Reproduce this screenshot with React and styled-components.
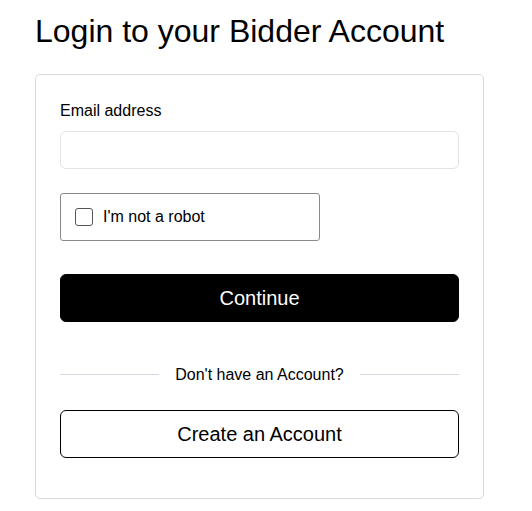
import React, { useState } from "react";
import styled, { createGlobalStyle } from "styled-components";

const GlobalStyle = createGlobalStyle`
  body {
    margin: 0;
    background: #fff;
    font-family: "Liberation Sans", Arial, sans-serif;
    color: #000;
  }
`;

const Page = styled.div`
  padding: 13px 48px 0 35px;
`;

const Title = styled.h1`
  margin: 0 0 24px;
  font-size: 32px;
  font-weight: 400;
  line-height: 37px;
`;

const Card = styled.div`
  border: 1px solid #d9d9d9;
  border-radius: 5px;
  padding: 26px 24px 40px 24px;
  width: 449px;
  box-sizing: border-box;
  display: flex;
  flex-direction: column;
`;

const Label = styled.label`
  font-size: 16px;
  line-height: 19px;
  margin-bottom: 11px;
`;

const Input = styled.input`
  height: 38px;
  box-sizing: border-box;
  border: 1px solid #e3e4e8;
  border-radius: 6px;
  padding: 0 12px;
  font-size: 16px;
  font-family: inherit;
  outline: none;
  margin-bottom: 24px;
`;

const Captcha = styled.label`
  width: 260px;
  height: 48px;
  box-sizing: border-box;
  border: 1px solid #8a8a8a;
  border-radius: 3px;
  display: flex;
  align-items: center;
  gap: 10px;
  padding-left: 14px;
  font-size: 16px;
  cursor: pointer;
  margin-bottom: 33px;
`;

const Box = styled.span`
  width: 18px;
  height: 18px;
  box-sizing: border-box;
  border: 1px solid #555;
  border-radius: 3px;
  background: ${(p) => (p.checked ? "#000" : "#fff")};
`;

const Button = styled.button`
  height: 48px;
  border-radius: 6px;
  font-size: 20px;
  font-family: inherit;
  cursor: pointer;
  border: 1px solid #000;
  background: ${(p) => (p.primary ? "#000" : "#fff")};
  color: ${(p) => (p.primary ? "#fff" : "#000")};
`;

const Divider = styled.div`
  display: flex;
  align-items: center;
  gap: 16px;
  margin: 43px 0 26px;
  font-size: 16px;
  line-height: 19px;

  &::before,
  &::after {
    content: "";
    flex: 1;
    height: 1px;
    background: #d6dae0;
  }
`;

export default function App() {
  const [checked, setChecked] = useState(false);

  return (
    <Page>
      <GlobalStyle />
      <Title>Login to your Bidder Account</Title>
      <Card>
        <Label htmlFor="email">Email address</Label>
        <Input id="email" type="email" />
        <Captcha onClick={() => setChecked(!checked)}>
          <Box checked={checked} />
          I'm not a robot
        </Captcha>
        <Button primary>Continue</Button>
        <Divider>Don't have an Account?</Divider>
        <Button>Create an Account</Button>
      </Card>
    </Page>
  );
}
